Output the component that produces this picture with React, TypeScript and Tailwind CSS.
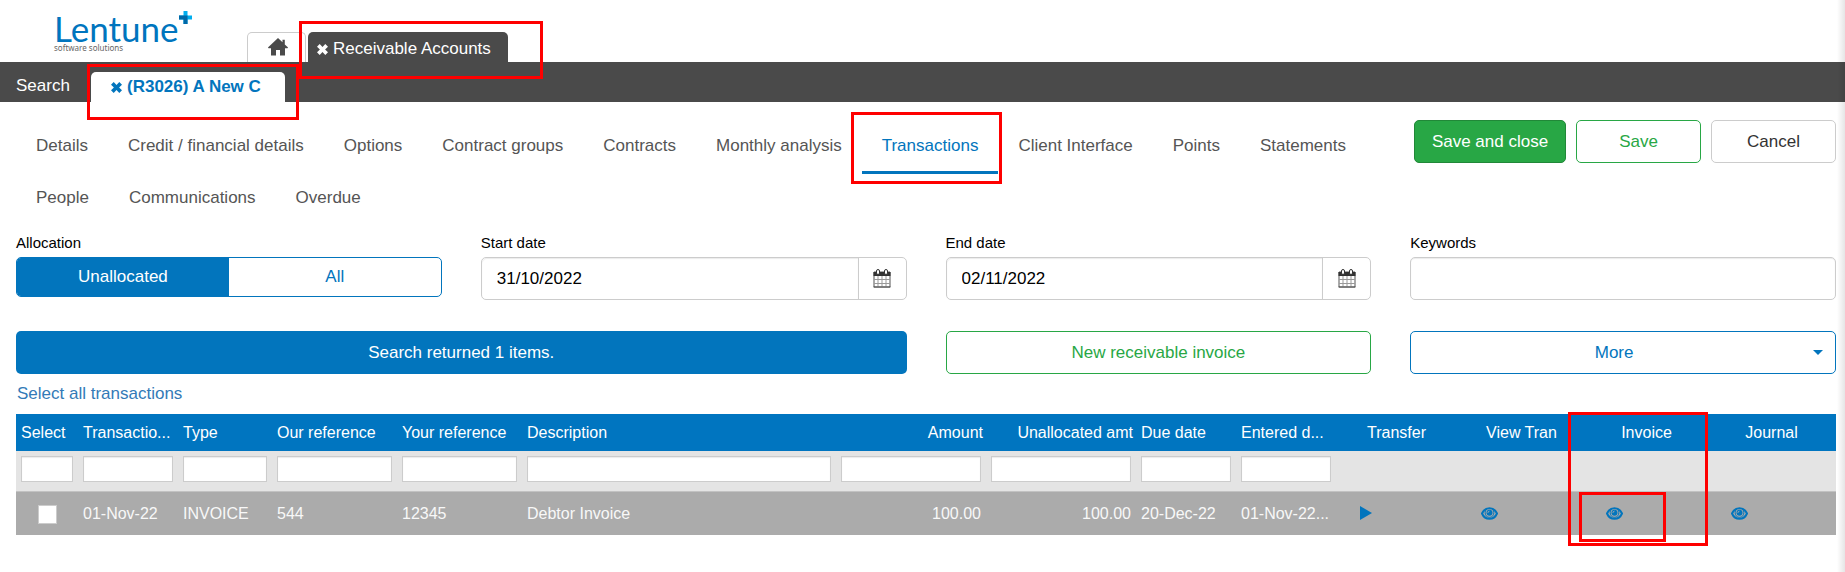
import type { ReactNode } from "react"
import clsx from "clsx"

const navItems = [
  "Details",
  "Credit / financial details",
  "Options",
  "Contract groups",
  "Contracts",
  "Monthly analysis",
  "Transactions",
  "Client Interface",
  "Points",
  "Statements",
  "People",
  "Communications",
  "Overdue",
]

type Column = {
  title: string
  value?: string
  width: string
  align?: "right" | "center"
}

const columns: Column[] = [
  { title: "Select", width: "w-[62px]" },
  { title: "Transactio...", value: "01-Nov-22", width: "w-[100px]" },
  { title: "Type", value: "INVOICE", width: "w-[94px]" },
  { title: "Our reference", value: "544", width: "w-[125px]" },
  { title: "Your reference", value: "12345", width: "w-[125px]" },
  { title: "Description", value: "Debtor Invoice", width: "" },
  { title: "Amount", value: "100.00", width: "w-[150px]", align: "right" },
  { title: "Unallocated amt", value: "100.00", width: "w-[150px]", align: "right" },
  { title: "Due date", value: "20-Dec-22", width: "w-[100px]" },
  { title: "Entered d...", value: "01-Nov-22...", width: "w-[100px]" },
]

const actions = ["Transfer", "View Tran", "Invoice", "Journal"]

function Highlight({ className }: { className: string }) {
  return <span aria-hidden="true" className={clsx("pointer-events-none absolute z-20 border-3 border-[#fe0000]", className)} />
}

function CrossIcon() {
  return (
    <svg viewBox="0 0 11 11" className="h-[11px] w-[11px] shrink-0" fill="currentColor">
      <path d="M2.7 0 5.5 2.900 8.300 0 11 2.700 8.100 5.500 11 8.300 8.300 11 5.500 8.100 2.700 11 0 8.300 2.900 5.500 0 2.700z" />
    </svg>
  )
}

function HomeIcon() {
  return (
    <svg viewBox="0 0 20 18" className="h-[18px] w-5" fill="currentColor">
      <path d="M10 0 .2 9.300c-.3.400-.1.900.4.900H3V17.500h5V12h4v5.500h5v-7.300h2.400c.5 0 .7-.5.400-.9L16.800 6.500V1.700h-2.300v2.600z" />
    </svg>
  )
}

function CalendarIcon() {
  return (
    <svg viewBox="0 0 18 19" className="h-[19px] w-[18px]">
      <path d="M1 3h16v15H1z" fill="#fff" stroke="#555" />
      <path d="M.5 3h17v4H.5z" fill="#333" />
      <path d="M5 7v11M9 7v11M13 7v11M1 10.5h16M1 14.5h16" stroke="#999" fill="none" />
      <path d="M.5 18h17" stroke="#555" />
      <rect x="3.5" y=".5" width="3" height="5" rx="1.5" fill="#fff" stroke="#333" />
      <rect x="11.5" y=".5" width="3" height="5" rx="1.5" fill="#fff" stroke="#333" />
    </svg>
  )
}

function EyeIcon() {
  return (
    <svg viewBox="0 0 17 13" className="h-[13px] w-[17px]" fill="none" stroke="currentColor">
      <path d="M1 6.5C2.500 3 5.200 1.200 8.500 1.200S14.500 3 16 6.500c-1.500 3.500-4.200 5.300-7.500 5.300S2.500 10 1 6.500z" strokeWidth="2" />
      <path d="M5.200 2.500c-1.400 2-1.400 4.500 0 6.300 1.700 2 4.900 2 6.600 0 1.400-1.800 1.400-4.300 0-6.300" strokeWidth="1" />
      <circle cx="8.500" cy="5.700" r="3" fill="currentColor" stroke="none" />
      <path d="M6.900 5.900a1.700 1.700 0 0 1 1.600-1.800" stroke="#ababab" strokeWidth=".9" />
    </svg>
  )
}

function PlayIcon() {
  return (
    <svg viewBox="0 0 12 14" className="h-3.5 w-3" fill="currentColor">
      <path d="M0 0 12 7 0 14z" />
    </svg>
  )
}

function Logo() {
  return (
    <div className="w-[247px] pt-3 pl-[54px]">
      <div className="flex items-start">
        <span className="font-[Lato] text-[35px] leading-8 text-[#0075be]">Lentune</span>
        <svg viewBox="0 0 13 13" className="-mt-px h-[13px] w-[13px]">
          <path d="M4.500 0h4v4.500H13v4H8.500V13h-4V8.500H0v-4h4.500z" fill="#00aeef" />
          <path d="M0 4.500h8.500V13h-4V8.500H0z" fill="#0068a8" />
        </svg>
      </div>
      <p className="font-['Noto_Sans'] text-[8px] leading-2 text-[#666]">software solutions</p>
    </div>
  )
}

function Field({ id, label, children }: { id: string; label: string; children: ReactNode }) {
  return (
    <div>
      <label htmlFor={id} className="mb-1 block text-[15px] leading-5 text-black">
        {label}
      </label>
      {children}
    </div>
  )
}

function DateField({ id, label, value }: { id: string; label: string; value: string }) {
  return (
    <Field id={id} label={label}>
      <div className="flex h-[43px] rounded-[5px] border border-[#ccc]">
        <input
          id={id}
          type="text"
          defaultValue={value}
          className="min-w-0 flex-1 rounded-l-[5px] px-[15px] text-black shadow-[inset_0_1px_1px_rgba(0,0,0,0.08)] outline-none"
        />
        <button type="button" aria-label={`Pick ${label}`} className="flex w-12 items-center justify-center border-l border-[#ccc]">
          <CalendarIcon />
        </button>
      </div>
    </Field>
  )
}

function TransactionsTable() {
  return (
    <table className="w-full table-fixed border-collapse text-[16px]">
      <thead>
        <tr className="h-[37px] bg-[#0075c0] text-white">
          {columns.map((col) => (
            <th
              key={col.title}
              className={clsx(
                "overflow-hidden pr-[3px] pl-[5px] font-normal whitespace-nowrap",
                col.width,
                col.align === "right" ? "text-right" : "text-left",
              )}
            >
              {col.title}
            </th>
          ))}
          {actions.map((title) => (
            <th key={title} className="relative w-[125px] pr-1 text-center font-normal">
              {title}
              {title === "Invoice" && <Highlight className="-top-0.5 -left-[18px] h-[134px] w-[140px]" />}
            </th>
          ))}
        </tr>
        <tr className="h-10 border-b border-[#c2c2c2] bg-[#e4e4e4]">
          {columns.map((col) => (
            <td key={col.title} className="px-[5px] pt-[5px] align-top">
              <input
                type="text"
                aria-label={`Filter ${col.title}`}
                className="block h-[26px] w-full border border-[#ccc] bg-white px-1 shadow-[inset_0_1px_1px_rgba(0,0,0,0.08)] outline-none"
              />
            </td>
          ))}
          {actions.map((title) => (
            <td key={title} />
          ))}
        </tr>
      </thead>
      <tbody>
        <tr className="h-11 bg-[#ababab] text-[#f8f8f8]">
          {columns.map((col) => (
            <td
              key={col.title}
              className={clsx("overflow-hidden px-[5px] pt-0.5 whitespace-nowrap", col.align === "right" && "text-right")}
            >
              {col.value ?? (
                <input
                  type="checkbox"
                  aria-label="Select transaction"
                  className="mx-auto block h-[19px] w-[19px] appearance-none border border-[#ccc] bg-white"
                />
              )}
            </td>
          ))}
          {actions.map((title) => (
            <td key={title} className={clsx("relative text-[#0275bd]", title === "Transfer" ? "pl-6" : "pl-5")}>
              <button type="button" aria-label={title} className="block">
                {title === "Transfer" ? <PlayIcon /> : <EyeIcon />}
              </button>
              {title === "Invoice" && <Highlight className="top-0 -left-[7px] h-[50px] w-[87px]" />}
            </td>
          ))}
        </tr>
      </tbody>
    </table>
  )
}

export default function App() {
  return (
    <div className="relative min-h-screen overflow-hidden bg-white font-['Liberation_Sans',Arial,sans-serif] text-[17px] leading-6">
      {/* Module tabs */}
      <header className="flex h-[62px]">
        <Logo />
        <div className="flex items-end">
          <a href="#home" aria-label="Home" className="flex h-[30px] w-[59px] justify-center rounded-t-[5px] border border-b-0 border-[#ccc] pt-[5px] pl-0.5 text-[#4a4a4a]">
            <HomeIcon />
          </a>
          <div className="relative ml-0.5">
            <a href="#receivable" className="flex h-[30px] w-[200px] items-center gap-[5px] rounded-t-[5px] bg-[#4a4a4a] pt-1 pl-[9px] text-white">
              <CrossIcon />
              Receivable Accounts
            </a>
            <Highlight className="-top-[11px] -left-[9px] h-[58px] w-[244px]" />
          </div>
        </div>
      </header>

      {/* Record tabs */}
      <div className="flex h-10 items-end bg-[#4a4a4a]">
        <a href="#search" className="w-[91px] pb-1 pl-4 text-white">
          Search
        </a>
        <div className="relative">
          <a href="#r3026" className="flex h-[30px] w-[194px] items-center gap-[5px] rounded-t-[5px] bg-white pl-5 font-bold text-[#0275bd]">
            <CrossIcon />
            (R3026) A New C
          </a>
          <Highlight className="-top-2 -left-1 h-14 w-[212px]" />
        </div>
      </div>

      <main className="pt-[18px] pr-[9px] pl-4">
        <div className="flex items-start">
          <nav className="flex flex-1 flex-wrap pt-0.5">
            {navItems.map((item) => {
              const active = item === "Transactions"
              return (
                <a
                  key={item}
                  href="#"
                  className={clsx(
                    "relative h-13 border-b-3 px-5 leading-12",
                    active ? "border-[#0275bd] text-[#0275bd]" : "border-transparent text-[#555]",
                  )}
                >
                  {item}
                  {active && <Highlight className="-top-[10px] -right-1 -bottom-[13px] -left-[11px]" />}
                </a>
              )
            })}
          </nav>
          <div className="flex gap-2.5">
            <button type="button" className="h-[43px] w-[152px] rounded-[5px] border border-[#218838] bg-[#28a745] text-white">
              Save and close
            </button>
            <button type="button" className="h-[43px] w-[125px] rounded-[5px] border border-[#28a745] text-[#28a745]">
              Save
            </button>
            <button type="button" className="h-[43px] w-[125px] rounded-[5px] border border-[#ccc] text-[#333]">
              Cancel
            </button>
          </div>
        </div>

        {/* Filters */}
        <div className="mt-[7px] grid grid-cols-4 gap-x-[39px]">
          <div role="group" aria-labelledby="allocation">
            <span id="allocation" className="mb-1 block text-[15px] leading-5 text-black">
              Allocation
            </span>
            <div className="flex h-10 overflow-hidden rounded-[5px] border border-[#0275bd]">
              <button type="button" aria-pressed="true" className="flex-1 bg-[#0275bd] text-white">
                Unallocated
              </button>
              <button type="button" aria-pressed="false" className="flex-1 text-[#0275bd]">
                All
              </button>
            </div>
          </div>
          <DateField id="start-date" label="Start date" value="31/10/2022" />
          <DateField id="end-date" label="End date" value="02/11/2022" />
          <Field id="keywords" label="Keywords">
            <input
              id="keywords"
              type="text"
              className="block h-[43px] w-full rounded-[5px] border border-[#ccc] px-[15px] shadow-[inset_0_1px_1px_rgba(0,0,0,0.08)] outline-none"
            />
          </Field>
        </div>

        <div className="mt-[31px] grid grid-cols-4 gap-x-[39px]">
          <button type="button" className="col-span-2 h-[43px] rounded-[5px] bg-[#0275bd] text-white">
            Search returned 1 items.
          </button>
          <button type="button" className="h-[43px] rounded-[5px] border border-[#28a745] text-[#28a745]">
            New receivable invoice
          </button>
          <button type="button" className="flex h-[43px] items-center rounded-[5px] border border-[#0275bd] pr-3 pl-1 text-[#0275bd]">
            <span className="flex-1">More</span>
            <svg viewBox="0 0 10 5" className="h-[5px] w-2.5" fill="currentColor">
              <path d="M0 0h10L5 5z" />
            </svg>
          </button>
        </div>

        <div className="flex h-10 items-center pl-px">
          <a href="#select-all" className="text-[#337ab7]">
            Select all transactions
          </a>
        </div>

        <TransactionsTable />
      </main>

      {/* Soft shadow along the right edge */}
      <div className="pointer-events-none absolute inset-y-0 right-0 w-2 bg-gradient-to-r from-transparent to-black/10" />
    </div>
  )
}
